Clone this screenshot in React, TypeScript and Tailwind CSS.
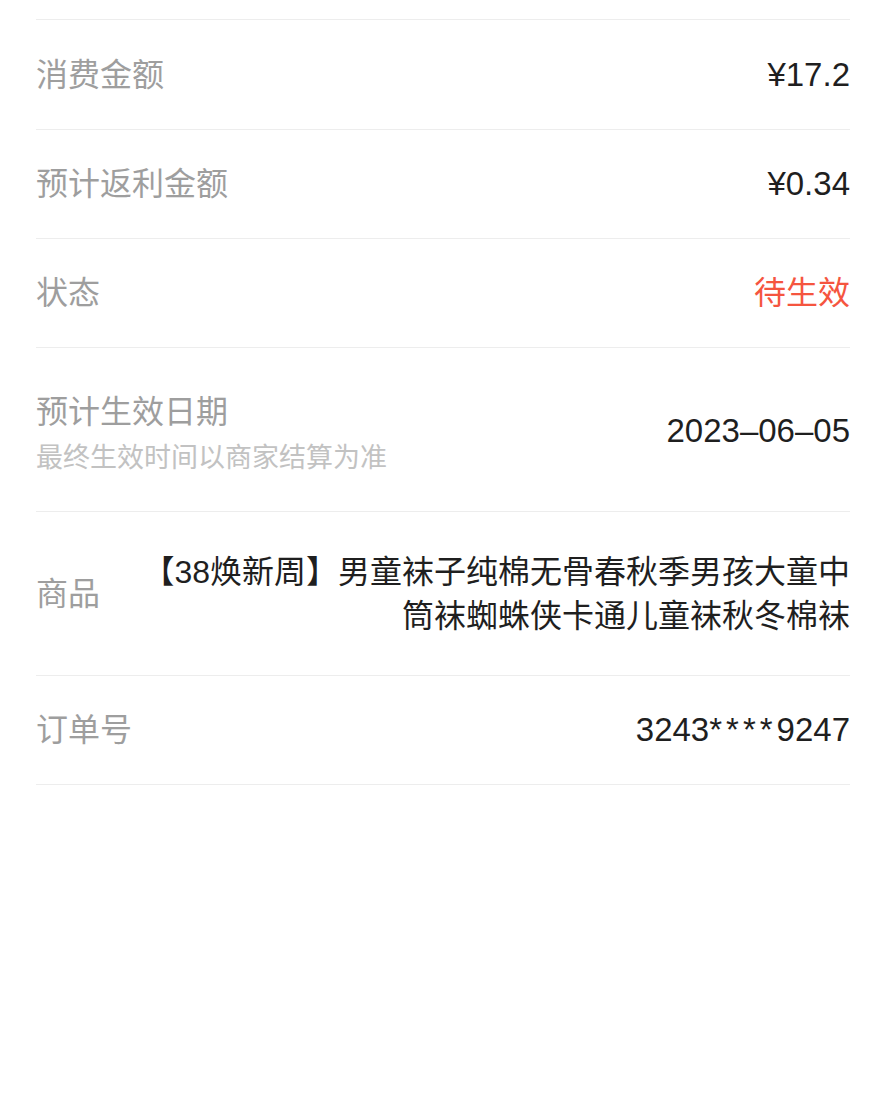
const FONT = '"Liberation Sans", "Noto Sans CJK SC", sans-serif'

type Row = {
  label: string
  value: React.ReactNode
  tone?: 'red'
  first?: boolean
}

const rows: Row[] = [
  { label: '消费金额', value: '¥17.2', first: true },
  { label: '预计返利金额', value: '¥0.34' },
  { label: '状态', value: '待生效', tone: 'red' },
]

function SimpleRow({ label, value, tone, first }: Row) {
  return (
    <div className={`flex items-center justify-between border-b border-[#ededed] ${first ? 'h-[110px]' : 'h-[109px]'}`}>
      <span className="text-[32px] text-[#9e9e9e] leading-[44px]">{label}</span>
      <span className={`leading-[44px] ${tone === 'red' ? 'text-[32px] text-[#f5553f]' : 'text-[33px] text-[#1f1f1f]'}`}>
        {value}
      </span>
    </div>
  )
}

export default function App() {
  return (
    <div className="min-h-[1110px] bg-white" style={{ fontFamily: FONT }}>
      <div className="pt-[19px] pl-[36px] pr-[37px]">
        <div className="border-t border-[#ededed]">
          {rows.map(r => <SimpleRow key={r.label} {...r} />)}

          {/* 预计生效日期 */}
          <div className="flex items-center justify-between h-[164px] border-b border-[#ededed]">
            <div className="flex flex-col pt-[12px]">
              <span className="text-[32px] text-[#9e9e9e] leading-[44px]">预计生效日期</span>
              <span className="text-[27px] text-[#c2c2c2] leading-[48px]">最终生效时间以商家结算为准</span>
            </div>
            <span className="text-[33px] text-[#1f1f1f] leading-[44px] pt-[2px]">2023–06–05</span>
          </div>

          {/* 商品 */}
          <div className="flex items-center justify-between gap-10 h-[164px] border-b border-[#ededed]">
            <span className="text-[32px] text-[#9e9e9e] leading-[44px] shrink-0">商品</span>
            <span className="text-[32px] text-[#1f1f1f] leading-[44px] text-right">
              【38焕新周】男童袜子纯棉无骨春秋季男孩大童中<br />筒袜蜘蛛侠卡通儿童袜秋冬棉袜
            </span>
          </div>

          <SimpleRow
            label="订单号"
            value={<>3243<span className="tracking-[4px]">****</span>9247</>}
          />
        </div>
      </div>
    </div>
  )
}
